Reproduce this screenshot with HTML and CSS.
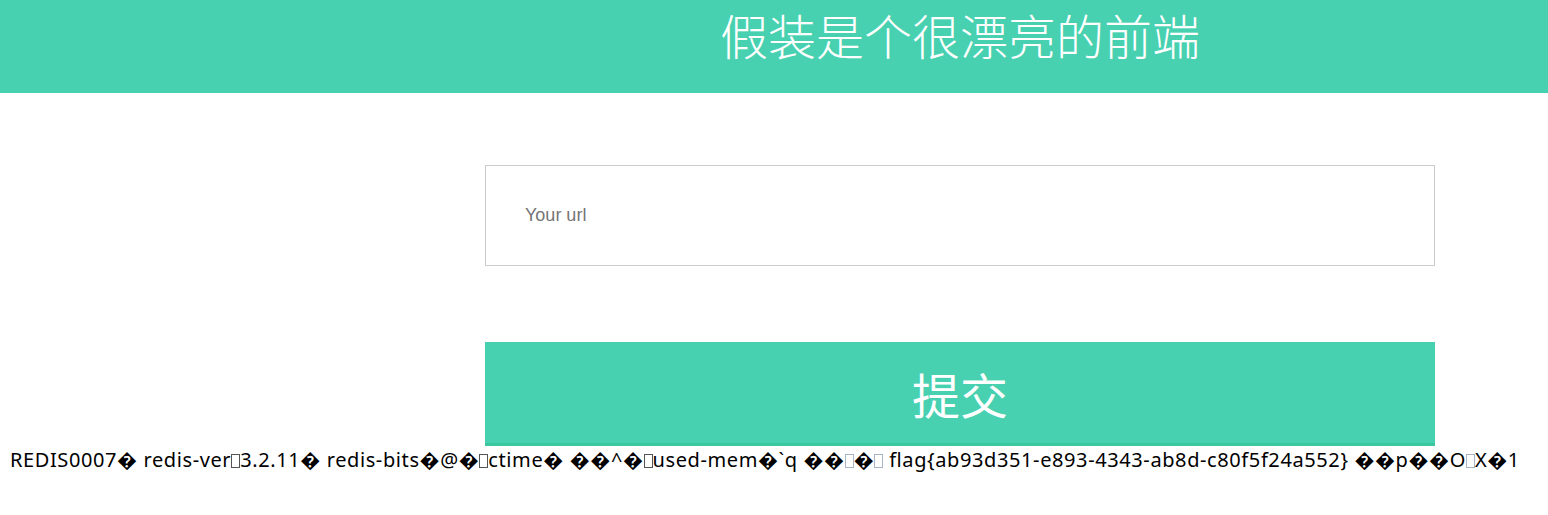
FILE: index.html
```html
<!DOCTYPE html>
<html lang="zh-CN">
<head>
<meta charset="utf-8">
<title>假装是个很漂亮的前端</title>
<link rel="stylesheet" href="styles.css">
</head>
<body>
<header class="topbar">
  <div class="wrap">
    <h1 class="title">假装是个很漂亮的前端</h1>
  </div>
</header>
<main class="wrap">
  <form class="url-form" action="#" method="post">
    <input class="url-input" type="text" name="url" placeholder="Your url">
    <button class="submit" type="submit">提交</button>
  </form>
</main>
<p class="dump">REDIS0007� redis-ver<span class="ctl"></span>3.2.11� redis-bits�@�<span class="ctl"></span>ctime� ��^�<span class="ctl"></span>used-mem�`q ��<span class="ctl lt"></span>�<span class="ctl lt"></span> flag{ab93d351-e893-4343-ab8d-c80f5f24a552} ��p��O<span class="ctl lt"></span>X�1</p>
</body>
</html>
```
FILE: styles.css
```css
html, body {
  margin: 0;
  padding: 0;
  background: #ffffff;
}

body {
  font-family: "Noto Sans", "Noto Sans CJK SC", sans-serif;
  color: #000;
}

.topbar {
  background: #47d1b0;
  height: 93px;
}

.wrap {
  width: 950px;
  margin-left: 485px;
}

.title {
  margin: 0;
  padding-top: 0;
  text-align: center;
  font-family: "Noto Sans CJK SC", sans-serif;
  font-weight: 300;
  font-size: 48px;
  line-height: 69px;
  color: #ffffff;
}

.url-form {
  display: flex;
  flex-direction: column;
  padding-top: 72px;
  gap: 76px;
}

.url-input {
  box-sizing: border-box;
  width: 950px;
  height: 101px;
  margin: 0;
  padding: 0 0 0 39px;
  border: 1px solid #cccccc;
  border-radius: 0;
  font-family: "Liberation Sans", sans-serif;
  font-size: 18px;
  color: #333;
  outline: none;
}

.url-input::placeholder {
  color: #757575;
}

.submit {
  box-sizing: border-box;
  width: 950px;
  height: 104px;
  margin: 0;
  padding: 0;
  border: 0;
  border-bottom: 3px solid #3ac89f;
  border-radius: 0;
  background: #47d1b0;
  color: #ffffff;
  font-family: "Noto Sans CJK SC", sans-serif;
  font-weight: 400;
  font-size: 48px;
  line-height: 1;
  cursor: pointer;
}

.dump {
  margin: 0;
  padding-left: 10px;
  font-size: 20px;
  letter-spacing: 0.6px;
  line-height: 28px;
  white-space: nowrap;
}

.ctl {
  display: inline-block;
  box-sizing: border-box;
  width: 9px;
  height: 14px;
  border: 1px solid #555;
  vertical-align: -1px;
}

.ctl.lt {
  border-color: #a8b4c8;
}
```
